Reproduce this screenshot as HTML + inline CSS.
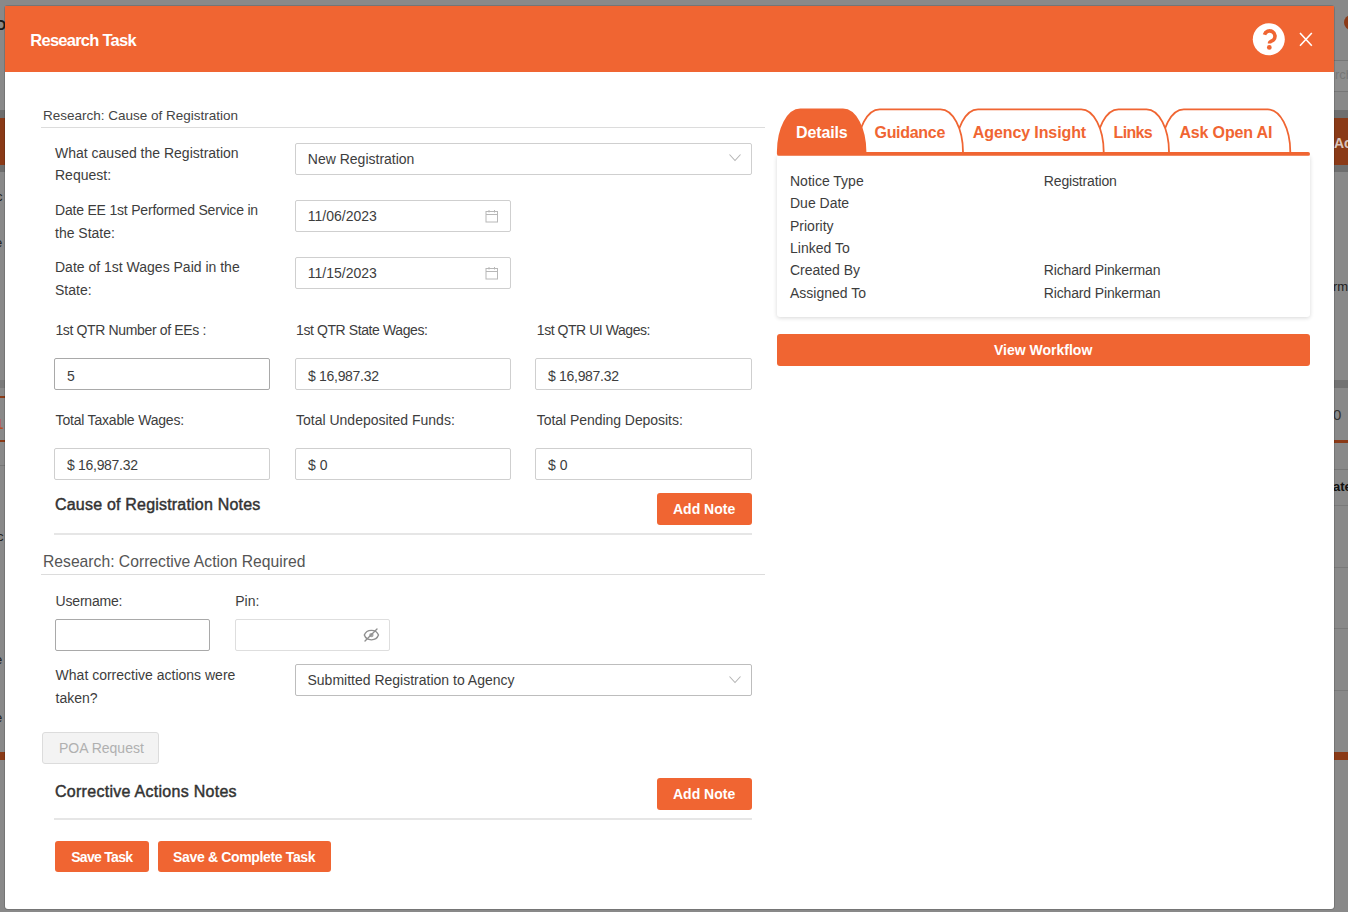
<!DOCTYPE html>
<html><head><meta charset="utf-8"><title>Research Task</title>
<style>
html,body{margin:0;padding:0;}
body{width:1348px;height:912px;overflow:hidden;position:relative;background:#898989;font-family:"Liberation Sans", sans-serif;}
.a{position:absolute;}
.t{position:absolute;white-space:nowrap;}
</style></head><body>
<div class="a" style="left:0px;top:110px;width:5px;height:8px;background:#6e6e6e"></div>
<div class="a" style="left:0px;top:118px;width:5px;height:47px;background:#8a3a17"></div>
<div class="a" style="left:0px;top:165px;width:5px;height:7px;background:#6e6e6e"></div>
<div class="a" style="left:0px;top:380px;width:5px;height:8px;background:#7a7a7a"></div>
<div class="a" style="left:0px;top:396px;width:5px;height:2px;background:#8a3a17"></div>
<div class="a" style="left:0px;top:440px;width:5px;height:2px;background:#8a3a17"></div>
<div class="a" style="left:0px;top:465px;width:5px;height:1px;background:#777"></div>
<div class="a" style="left:1334px;top:469px;width:14px;height:1px;background:#777"></div>
<div class="t" style="left:-5px;top:413.30px;font-size:15px;line-height:21px;font-weight:bold;color:#b5501f;">1</div>
<div class="a" style="left:0px;top:752px;width:5px;height:8px;background:#8a3a17"></div>
<div class="a" style="left:1334px;top:60px;width:14px;height:1px;background:#777"></div>
<div class="a" style="left:1334px;top:61px;width:14px;height:30px;background:#8d8d8d"></div>
<div class="a" style="left:1334px;top:91px;width:14px;height:1px;background:#777"></div>
<div class="a" style="left:1334px;top:110px;width:14px;height:8px;background:#6e6e6e"></div>
<div class="a" style="left:1334px;top:118px;width:14px;height:47px;background:#8a3a17"></div>
<div class="a" style="left:1334px;top:165px;width:14px;height:7px;background:#6e6e6e"></div>
<div class="a" style="left:1334px;top:380px;width:14px;height:8px;background:#727272"></div>
<div class="a" style="left:1334px;top:440px;width:14px;height:3px;background:#8a3a17"></div>
<div class="a" style="left:1334px;top:505px;width:14px;height:1px;background:#7a7a7a"></div>
<div class="a" style="left:1334px;top:567px;width:14px;height:1px;background:#7a7a7a"></div>
<div class="a" style="left:1334px;top:628px;width:14px;height:1px;background:#7a7a7a"></div>
<div class="a" style="left:1334px;top:690px;width:14px;height:1px;background:#7a7a7a"></div>
<div class="a" style="left:1334px;top:752px;width:14px;height:8px;background:#8a3a17"></div>
<div class="a" style="left:1344px;top:15px;width:14px;height:15px;background:#8a3a17;border-radius:50%"></div>
<div class="t" style="left:1335px;top:66.49px;font-size:13px;line-height:18px;font-weight:normal;color:#777;">rch</div>
<div class="t" style="left:1334px;top:133.15px;font-size:14px;line-height:20px;font-weight:bold;color:#d9c4bb;">Ac</div>
<div class="t" style="left:1333px;top:278.49px;font-size:13px;line-height:18px;font-weight:normal;color:#222;">rm</div>
<div class="t" style="left:1333px;top:404.30px;font-size:15px;line-height:21px;font-weight:normal;color:#333;">0</div>
<div class="t" style="left:1333px;top:478.49px;font-size:13px;line-height:18px;font-weight:bold;color:#111;">ate</div>
<div class="t" style="left:-4px;top:15.15px;font-size:14px;line-height:20px;font-weight:bold;color:#1a1a1a;">D</div>
<div class="t" style="left:-4px;top:188.49px;font-size:13px;line-height:18px;font-weight:normal;color:#222;">c</div>
<div class="t" style="left:-5px;top:234.49px;font-size:13px;line-height:18px;font-weight:normal;color:#222;">e</div>
<div class="t" style="left:-6px;top:528.49px;font-size:13px;line-height:18px;font-weight:normal;color:#222;">ic</div>
<div class="t" style="left:-5px;top:651.49px;font-size:13px;line-height:18px;font-weight:normal;color:#222;">e</div>
<div class="t" style="left:-5px;top:709.49px;font-size:13px;line-height:18px;font-weight:normal;color:#222;">e</div>
<div class="a" style="left:5px;top:6px;width:1329px;height:903px;background:#fff;border-radius:3px;box-shadow:0 0 0 1px rgba(0,0,0,0.14)"></div>
<div class="a" style="left:5px;top:6px;width:1329px;height:66px;background:#f06532"></div>
<div class="t" style="left:30.3px;top:29.08px;font-size:16.5px;line-height:23px;font-weight:bold;color:#fff;letter-spacing:-0.75px">Research Task</div>
<svg class="a" style="left:1252px;top:23px" width="34" height="34" viewBox="0 0 34 34"><circle cx="16.8" cy="16.2" r="16" fill="#fff"/><path d="M12.5 11.7 A5.35 5.35 0 1 1 21.5 16.9 C19.9 18.2 17.6 18.4 17.6 19.6 V20.4" fill="none" stroke="#f06532" stroke-width="3.6" stroke-linecap="butt"/><circle cx="17.3" cy="24.4" r="2.35" fill="#f06532"/></svg>
<svg class="a" style="left:1298px;top:31px" width="16" height="16" viewBox="0 0 16 16"><path d="M2 2 L13.8 14.8 M13.8 2 L2 14.8" stroke="#fff" stroke-width="1.6" fill="none"/></svg>
<div class="t" style="left:43px;top:106.42px;font-size:13.5px;line-height:19px;font-weight:normal;color:#444;">Research: Cause of Registration</div>
<div class="a" style="left:41px;top:127px;width:724px;height:1px;background:#dcdcdc"></div>
<div class="t" style="left:55px;top:143.45px;font-size:14px;line-height:20px;font-weight:normal;color:#3d3d3d;">What caused the Registration</div>
<div class="t" style="left:55px;top:165.45px;font-size:14px;line-height:20px;font-weight:normal;color:#3d3d3d;">Request:</div>
<div class="a" style="left:295px;top:143px;width:457px;height:32px;box-sizing:border-box;border:1px solid #cfcfcf;background:#fff;border-radius:2px"></div>
<div class="t" style="left:307.8px;top:148.55px;font-size:14px;line-height:20px;font-weight:normal;color:#3d3d3d;">New Registration</div>
<svg class="a" style="left:728px;top:153px" width="14" height="10" viewBox="0 0 14 10"><path d="M1.5 1.5 L7 7.5 L12.5 1.5" stroke="#b5b5b5" stroke-width="1.1" fill="none"/></svg>
<div class="t" style="left:55px;top:200.15px;font-size:14px;line-height:20px;font-weight:normal;color:#3d3d3d;letter-spacing:-0.2px">Date EE 1st Performed Service in</div>
<div class="t" style="left:55px;top:222.65px;font-size:14px;line-height:20px;font-weight:normal;color:#3d3d3d;">the State:</div>
<div class="a" style="left:295px;top:200px;width:216px;height:32px;box-sizing:border-box;border:1px solid #cfcfcf;background:#fff;border-radius:2px"></div>
<div class="t" style="left:307.8px;top:206.05px;font-size:14px;line-height:20px;font-weight:normal;color:#3d3d3d;">11/06/2023</div>
<svg class="a" style="left:484.5px;top:209.5px" width="14" height="13" viewBox="0 0 14 13"><rect x="1" y="1.5" width="11.5" height="10.5" fill="none" stroke="#b8b8b8" stroke-width="1"/><path d="M1 4.5 H12.5 M4 0 V2.5 M9.5 0 V2.5" stroke="#b8b8b8" stroke-width="1"/></svg>
<div class="t" style="left:55px;top:257.15px;font-size:14px;line-height:20px;font-weight:normal;color:#3d3d3d;">Date of 1st Wages Paid in the</div>
<div class="t" style="left:55px;top:279.65px;font-size:14px;line-height:20px;font-weight:normal;color:#3d3d3d;">State:</div>
<div class="a" style="left:295px;top:257px;width:216px;height:32px;box-sizing:border-box;border:1px solid #cfcfcf;background:#fff;border-radius:2px"></div>
<div class="t" style="left:307.8px;top:262.75px;font-size:14px;line-height:20px;font-weight:normal;color:#3d3d3d;">11/15/2023</div>
<svg class="a" style="left:484.5px;top:266.5px" width="14" height="13" viewBox="0 0 14 13"><rect x="1" y="1.5" width="11.5" height="10.5" fill="none" stroke="#b8b8b8" stroke-width="1"/><path d="M1 4.5 H12.5 M4 0 V2.5 M9.5 0 V2.5" stroke="#b8b8b8" stroke-width="1"/></svg>
<div class="t" style="left:55.4px;top:319.85px;font-size:14px;line-height:20px;font-weight:normal;color:#3d3d3d;letter-spacing:-0.35px">1st QTR Number of EEs :</div>
<div class="t" style="left:296px;top:319.85px;font-size:14px;line-height:20px;font-weight:normal;color:#3d3d3d;letter-spacing:-0.4px">1st QTR State Wages:</div>
<div class="t" style="left:536.8px;top:319.85px;font-size:14px;line-height:20px;font-weight:normal;color:#3d3d3d;letter-spacing:-0.45px">1st QTR UI Wages:</div>
<div class="a" style="left:54px;top:358px;width:216px;height:32px;box-sizing:border-box;border:1px solid #a9a9a9;background:#fff;border-radius:2px"></div>
<div class="t" style="left:67px;top:365.55px;font-size:14px;line-height:20px;font-weight:normal;color:#3d3d3d;">5</div>
<div class="a" style="left:295px;top:358px;width:216px;height:32px;box-sizing:border-box;border:1px solid #cfcfcf;background:#fff;border-radius:2px"></div>
<div class="t" style="left:308px;top:365.55px;font-size:14px;line-height:20px;font-weight:normal;color:#3d3d3d;letter-spacing:-0.3px">$ 16,987.32</div>
<div class="a" style="left:535px;top:358px;width:217px;height:32px;box-sizing:border-box;border:1px solid #cfcfcf;background:#fff;border-radius:2px"></div>
<div class="t" style="left:548px;top:365.55px;font-size:14px;line-height:20px;font-weight:normal;color:#3d3d3d;letter-spacing:-0.3px">$ 16,987.32</div>
<div class="t" style="left:55.6px;top:409.85px;font-size:14px;line-height:20px;font-weight:normal;color:#3d3d3d;letter-spacing:-0.2px">Total Taxable Wages:</div>
<div class="t" style="left:296px;top:409.85px;font-size:14px;line-height:20px;font-weight:normal;color:#3d3d3d;">Total Undeposited Funds:</div>
<div class="t" style="left:536.8px;top:409.85px;font-size:14px;line-height:20px;font-weight:normal;color:#3d3d3d;letter-spacing:-0.05px">Total Pending Deposits:</div>
<div class="a" style="left:54px;top:448px;width:216px;height:32px;box-sizing:border-box;border:1px solid #cfcfcf;background:#fff;border-radius:2px"></div>
<div class="t" style="left:67px;top:455.35px;font-size:14px;line-height:20px;font-weight:normal;color:#3d3d3d;letter-spacing:-0.3px">$ 16,987.32</div>
<div class="a" style="left:295px;top:448px;width:216px;height:32px;box-sizing:border-box;border:1px solid #cfcfcf;background:#fff;border-radius:2px"></div>
<div class="t" style="left:308px;top:455.35px;font-size:14px;line-height:20px;font-weight:normal;color:#3d3d3d;">$ 0</div>
<div class="a" style="left:535px;top:448px;width:217px;height:32px;box-sizing:border-box;border:1px solid #cfcfcf;background:#fff;border-radius:2px"></div>
<div class="t" style="left:548px;top:455.35px;font-size:14px;line-height:20px;font-weight:normal;color:#3d3d3d;">$ 0</div>
<div class="t" style="left:55px;top:494.45px;font-size:16px;line-height:22px;font-weight:normal;color:#333;letter-spacing:0.2px;-webkit-text-stroke:0.45px #333">Cause of Registration Notes</div>
<div class="a" style="left:657px;top:493px;width:95px;height:32px;background:#f06532;border-radius:3px"></div>
<div class="t" style="left:673px;top:498.85px;font-size:14px;line-height:20px;font-weight:bold;color:#fff;">Add Note</div>
<div class="a" style="left:54px;top:532.5px;width:698px;height:2px;background:#e6e6e6"></div>
<div class="t" style="left:43px;top:551.26px;font-size:15.7px;line-height:22px;font-weight:normal;color:#555;">Research: Corrective Action Required</div>
<div class="a" style="left:41px;top:574px;width:724px;height:1px;background:#dcdcdc"></div>
<div class="t" style="left:55.6px;top:591.35px;font-size:14px;line-height:20px;font-weight:normal;color:#3d3d3d;letter-spacing:-0.2px">Username:</div>
<div class="t" style="left:235.2px;top:591.35px;font-size:14px;line-height:20px;font-weight:normal;color:#3d3d3d;">Pin:</div>
<div class="a" style="left:55px;top:619px;width:155px;height:32px;box-sizing:border-box;border:1px solid #a9a9a9;background:#fff;border-radius:2px"></div>
<div class="a" style="left:235px;top:619px;width:155px;height:32px;box-sizing:border-box;border:1px solid #dedede;background:#fff;border-radius:2px"></div>
<svg class="a" style="left:363px;top:627px" width="17" height="16" viewBox="0 0 17 16"><path d="M1.3 8.1 C3.6 1.8 13.2 1.8 15.5 8.1 C13.2 14.4 3.6 14.4 1.3 8.1 Z" fill="none" stroke="#8f8f8f" stroke-width="1.35"/><circle cx="8.4" cy="8.1" r="2.2" fill="#a5a5a5"/><path d="M2.0 14.0 L14.0 2.0" stroke="#8f8f8f" stroke-width="1.35" stroke-linecap="round"/></svg>
<div class="t" style="left:55.6px;top:665.15px;font-size:14px;line-height:20px;font-weight:normal;color:#3d3d3d;">What corrective actions were</div>
<div class="t" style="left:55.6px;top:687.55px;font-size:14px;line-height:20px;font-weight:normal;color:#3d3d3d;">taken?</div>
<div class="a" style="left:295px;top:664px;width:457px;height:32px;box-sizing:border-box;border:1px solid #bdbdbd;background:#fff;border-radius:2px"></div>
<div class="t" style="left:307.5px;top:670.45px;font-size:14px;line-height:20px;font-weight:normal;color:#3d3d3d;">Submitted Registration to Agency</div>
<svg class="a" style="left:728px;top:675px" width="14" height="10" viewBox="0 0 14 10"><path d="M1.5 1.5 L7 7.5 L12.5 1.5" stroke="#b5b5b5" stroke-width="1.1" fill="none"/></svg>
<div class="a" style="left:42px;top:732px;width:117px;height:32px;box-sizing:border-box;border:1px solid #dcdcdc;background:#f3f3f3;border-radius:3px"></div>
<div class="t" style="left:59px;top:737.65px;font-size:14px;line-height:20px;font-weight:normal;color:#b0b0b0;">POA Request</div>
<div class="t" style="left:55px;top:780.65px;font-size:16px;line-height:22px;font-weight:normal;color:#333;letter-spacing:0.28px;-webkit-text-stroke:0.45px #333">Corrective Actions Notes</div>
<div class="a" style="left:657px;top:778px;width:95px;height:32px;background:#f06532;border-radius:3px"></div>
<div class="t" style="left:673px;top:783.85px;font-size:14px;line-height:20px;font-weight:bold;color:#fff;">Add Note</div>
<div class="a" style="left:54px;top:817.5px;width:698px;height:2px;background:#e6e6e6"></div>
<div class="a" style="left:54.5px;top:841px;width:94px;height:31px;background:#f06532;border-radius:3px"></div>
<div class="t" style="left:71.2px;top:846.85px;font-size:14px;line-height:20px;font-weight:bold;color:#fff;letter-spacing:-0.7px">Save Task</div>
<div class="a" style="left:157.5px;top:841px;width:173.5px;height:31px;background:#f06532;border-radius:3px"></div>
<div class="t" style="left:173.1px;top:846.85px;font-size:14px;line-height:20px;font-weight:bold;color:#fff;letter-spacing:-0.35px">Save &amp; Complete Task</div>
<div class="a" style="left:777px;top:156px;width:533px;height:161px;background:#fff;box-shadow:0 1px 4px rgba(0,0,0,0.16);border-radius:0 0 3px 3px"></div>
<svg class="a" style="left:770px;top:100px" width="560" height="60" viewBox="0 0 560 60"><path d="M391.30 53.00 L391.30 52.00 A22.5 42.60 0 0 1 413.80 9.40 L497.80 9.40 A22.5 42.60 0 0 1 520.30 52.00 L520.30 53.00 Z" fill="#fff" stroke="#f06532" stroke-width="1.8"/><path d="M326.00 53.00 L326.00 52.00 A22.5 42.60 0 0 1 348.50 9.40 L376.50 9.40 A22.5 42.60 0 0 1 399.00 52.00 L399.00 53.00 Z" fill="#fff" stroke="#f06532" stroke-width="1.8"/><path d="M185.50 53.00 L185.50 52.00 A22.5 42.60 0 0 1 208.00 9.40 L311.20 9.40 A22.5 42.60 0 0 1 333.70 52.00 L333.70 53.00 Z" fill="#fff" stroke="#f06532" stroke-width="1.8"/><path d="M87.20 53.00 L87.20 52.00 A22.5 42.60 0 0 1 109.70 9.40 L170.50 9.40 A22.5 42.60 0 0 1 193.00 52.00 L193.00 53.00 Z" fill="#fff" stroke="#f06532" stroke-width="1.8"/><path d="M7.80 53.00 L7.80 52.00 A22.5 42.60 0 0 1 30.30 9.40 L73.00 9.40 A22.5 42.60 0 0 1 95.50 52.00 L95.50 53.00 Z" fill="#f06532" stroke="#f06532" stroke-width="1.8"/><rect x="7" y="52" width="533" height="3.8" rx="1.9" fill="#f06532"/></svg>
<div class="t" style="left:796.1px;top:122.45px;font-size:16px;line-height:22px;font-weight:bold;color:#fff;letter-spacing:-0.15px">Details</div>
<div class="t" style="left:874.5px;top:122.45px;font-size:16px;line-height:22px;font-weight:bold;color:#f06532;letter-spacing:-0.3px">Guidance</div>
<div class="t" style="left:972.8px;top:122.45px;font-size:16px;line-height:22px;font-weight:bold;color:#f06532;letter-spacing:-0.1px">Agency Insight</div>
<div class="t" style="left:1113.6px;top:122.45px;font-size:16px;line-height:22px;font-weight:bold;color:#f06532;letter-spacing:-0.7px">Links</div>
<div class="t" style="left:1179.4px;top:122.45px;font-size:16px;line-height:22px;font-weight:bold;color:#f06532;letter-spacing:-0.15px">Ask Open AI</div>
<div class="t" style="left:790px;top:170.85px;font-size:14px;line-height:20px;font-weight:normal;color:#3d3d3d;">Notice Type</div>
<div class="t" style="left:1043.8px;top:170.85px;font-size:14px;line-height:20px;font-weight:normal;color:#3d3d3d;letter-spacing:-0.15px">Registration</div>
<div class="t" style="left:790px;top:193.20px;font-size:14px;line-height:20px;font-weight:normal;color:#3d3d3d;">Due Date</div>
<div class="t" style="left:790px;top:215.55px;font-size:14px;line-height:20px;font-weight:normal;color:#3d3d3d;">Priority</div>
<div class="t" style="left:790px;top:237.90px;font-size:14px;line-height:20px;font-weight:normal;color:#3d3d3d;">Linked To</div>
<div class="t" style="left:790px;top:260.25px;font-size:14px;line-height:20px;font-weight:normal;color:#3d3d3d;">Created By</div>
<div class="t" style="left:1043.8px;top:260.25px;font-size:14px;line-height:20px;font-weight:normal;color:#3d3d3d;letter-spacing:-0.15px">Richard Pinkerman</div>
<div class="t" style="left:790px;top:282.60px;font-size:14px;line-height:20px;font-weight:normal;color:#3d3d3d;">Assigned To</div>
<div class="t" style="left:1043.8px;top:282.60px;font-size:14px;line-height:20px;font-weight:normal;color:#3d3d3d;letter-spacing:-0.15px">Richard Pinkerman</div>
<div class="a" style="left:777px;top:334px;width:533px;height:32px;background:#f06532;border-radius:3px"></div>
<div class="t" style="left:994px;top:340.45px;font-size:14px;line-height:20px;font-weight:bold;color:#fff;">View Workflow</div>
</body></html>
